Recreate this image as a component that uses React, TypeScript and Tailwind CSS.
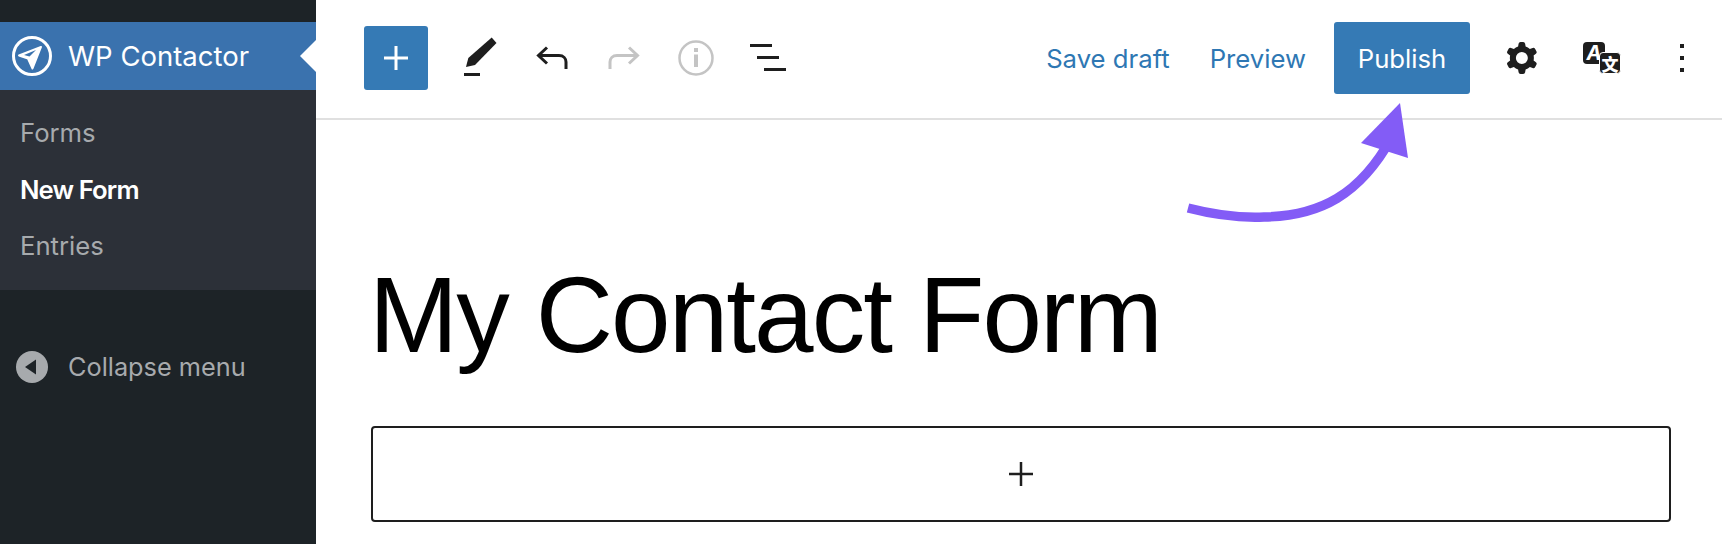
import { ReactNode } from 'react';

function IconButton({ children }: { children: ReactNode }) {
  return <button className="flex h-16 w-[72px] items-center justify-center">{children}</button>;
}

function SideLink({ label, active }: { label: string; active?: boolean }) {
  return (
    <a className={active ? 'block h-[56.5px] pl-5 text-[25.7px] leading-[56.5px] font-semibold tracking-[-0.9px] text-white' : 'block h-[56.5px] pl-5 text-[25.7px] leading-[56.5px] text-[#a7aaad]'}>
      {label}
    </a>
  );
}

function Sidebar() {
  return (
    <aside className="h-full w-[316px] shrink-0 bg-[#1d2327] pt-[22px]">
      <div className="relative flex h-[68px] items-center bg-[#3a72ae] pl-3">
        <svg width="40" height="40" viewBox="0 0 40 40" fill="none">
          <circle cx="20" cy="20" r="18.5" stroke="white" strokeWidth="3" />
          <path d="M29 11 L7 19.5 L16 22.5 L20.5 32.5 Z" fill="white" stroke="white" strokeWidth="2" strokeLinejoin="round" />
          <path d="M24 14 L12 19 L17.5 20.5 Z" fill="#3a72ae" />
        </svg>
        <span className="ml-4 pt-[2px] text-[27.5px] text-white">WP Contactor</span>
        <span className="absolute top-[18px] right-0 h-0 w-0 border-y-[16px] border-r-[16px] border-y-transparent border-r-white" />
      </div>
      <nav className="h-[200px] bg-[#2c3038] pt-[15px]">
        <SideLink label="Forms" />
        <SideLink label="New Form" active />
        <SideLink label="Entries" />
      </nav>
      <button className="mt-[58px] flex items-center pl-4 text-[25.3px] text-[#a7aaad]">
        <svg width="32" height="32" viewBox="0 0 32 32">
          <circle cx="16" cy="16" r="16" fill="#a7aaad" />
          <path d="M9 16 L20 8.5 V23.5 Z" fill="#1d2327" />
        </svg>
        <span className="ml-5">Collapse menu</span>
      </button>
    </aside>
  );
}

function Toolbar() {
  return (
    <header className="flex h-[120px] items-center border-b-2 border-[#e0e0e0] pb-[2px] pl-12">
      <button className="flex h-16 w-16 items-center justify-center rounded-[3px] bg-[#357ab5]">
        <svg width="26" height="26" viewBox="0 0 26 26">
          <path d="M13 1 V25 M1 13 H25" stroke="white" strokeWidth="3" />
        </svg>
      </button>
      <div className="ml-4 flex">
        <IconButton>
          <svg width="36" height="42" viewBox="0 0 36 42" fill="#1e1e1e">
            <path d="M4 30 L6.3 21 L29.7 0.5 L34.5 6 L13 28 Z" />
            <rect x="2" y="36" width="16" height="3" />
          </svg>
        </IconButton>
        <IconButton>
          <svg width="32" height="24" viewBox="0 0 32 24" fill="none" stroke="#1e1e1e" strokeWidth="3">
            <path d="M11 1.5 L2.5 9.5 L11 17.5" />
            <path d="M2.5 9.5 H23 C27.5 9.5 30 12.5 30 16 V23" />
          </svg>
        </IconButton>
        <IconButton>
          <svg width="32" height="24" viewBox="0 0 32 24" fill="none" stroke="#c4c4c4" strokeWidth="3">
            <path d="M21 1.5 L29.5 9.5 L21 17.5" />
            <path d="M29.5 9.5 H9 C4.5 9.5 2 12.5 2 16 V23" />
          </svg>
        </IconButton>
        <IconButton>
          <svg width="36" height="36" viewBox="0 0 36 36" fill="none" stroke="#c4c4c4">
            <circle cx="18" cy="18" r="16.5" strokeWidth="2.5" />
            <path d="M18 14.5 V27 M18 8 V12" strokeWidth="4" />
          </svg>
        </IconButton>
        <IconButton>
          <svg width="36" height="30" viewBox="0 0 36 30" fill="#1e1e1e">
            <rect x="0" y="1" width="22" height="3" />
            <rect x="7" y="13" width="22" height="3" />
            <rect x="14" y="25" width="22" height="3" />
          </svg>
        </IconButton>
      </div>
      <div className="ml-auto flex items-center">
        <a className="pt-[3px] text-[25.7px] text-[#2e77b3]">Save draft</a>
        <a className="ml-10 pt-[3px] text-[25.7px] text-[#2e77b3]">Preview</a>
        <button className="ml-[28px] h-[72px] w-[136px] rounded-[3px] bg-[#357ab5] pt-[3px] text-[25.7px] text-white">Publish</button>
        <button className="ml-3 flex h-16 w-20 items-center justify-center">
          <svg width="48" height="48" viewBox="0 0 24 24" fill="#1e1e1e">
            <path
              fillRule="evenodd"
              d="M10.289 4.836A1 1 0 0111.275 4h1.306a1 1 0 01.987.836l.244 1.466c.787.26 1.503.679 2.108 1.218l1.393-.522a1 1 0 011.216.437l.653 1.13a1 1 0 01-.23 1.273l-1.148.944a6.025 6.025 0 010 2.435l1.149.946a1 1 0 01.23 1.272l-.653 1.13a1 1 0 01-1.216.437l-1.394-.522c-.605.54-1.32.958-2.108 1.218l-.244 1.466a1 1 0 01-.987.836h-1.306a1 1 0 01-.986-.836l-.244-1.466a5.995 5.995 0 01-2.108-1.218l-1.394.522a1 1 0 01-1.217-.436l-.653-1.131a1 1 0 01.23-1.272l1.149-.946a6.026 6.026 0 010-2.435l-1.148-.944a1 1 0 01-.23-1.272l.653-1.131a1 1 0 011.217-.437l1.393.522a5.994 5.994 0 012.108-1.218l.244-1.466zM14.929 12a3 3 0 11-6 0 3 3 0 016 0z"
            />
          </svg>
        </button>
        <button className="flex h-16 w-20 items-center justify-center">
          <span className="relative block h-8 w-[38px]">
            <span className="absolute top-0 left-0 flex h-[22px] w-[22px] items-center justify-center rounded-[4px] bg-[#1e1e1e] text-[20px] leading-none font-bold text-white italic">A</span>
            <span className="absolute top-[10px] left-4 flex h-[22px] w-[22px] items-center justify-center rounded-[4px] border border-white bg-[#1e1e1e] font-['Noto_Sans_CJK_SC',sans-serif] text-[17px] leading-none font-black text-white">文</span>
          </span>
        </button>
        <button className="flex h-16 w-20 flex-col items-center justify-center gap-2">
          <span className="h-1 w-1 bg-[#1e1e1e]" />
          <span className="h-1 w-1 bg-[#1e1e1e]" />
          <span className="h-1 w-1 bg-[#1e1e1e]" />
        </button>
      </div>
    </header>
  );
}

export default function App() {
  return (
    <div className="relative flex h-[544px] w-[1722px] overflow-hidden bg-white font-['Inter',sans-serif]">
      <Sidebar />
      <main className="flex-1">
        <Toolbar />
        <div className="pl-[55px]">
          <h1 className="mt-[135px] -ml-[2px] font-['Liberation_Sans',sans-serif] text-[107px] leading-[120px] font-normal tracking-[-1.9px] text-black">My Contact Form</h1>
          <button className="mt-[51px] flex h-[96px] w-[1300px] items-center justify-center rounded-[4px] border-2 border-[#1e1e1e]">
            <svg width="24" height="24" viewBox="0 0 24 24">
              <path d="M12 0 V24 M0 12 H24" stroke="#1e1e1e" strokeWidth="2.5" />
            </svg>
          </button>
        </div>
      </main>
      {/* purple pointer over the Publish button */}
      <svg className="absolute top-[95px] left-[1170px]" width="260" height="130" viewBox="0 0 260 130" fill="none">
        <path d="M18 113 C45 120 70 123 94 122 C150 121 190 100 222 42" stroke="#835cf6" strokeWidth="9.5" />
        <path d="M230 8 L191 48 L238 63 Z" fill="#835cf6" />
      </svg>
    </div>
  );
}
